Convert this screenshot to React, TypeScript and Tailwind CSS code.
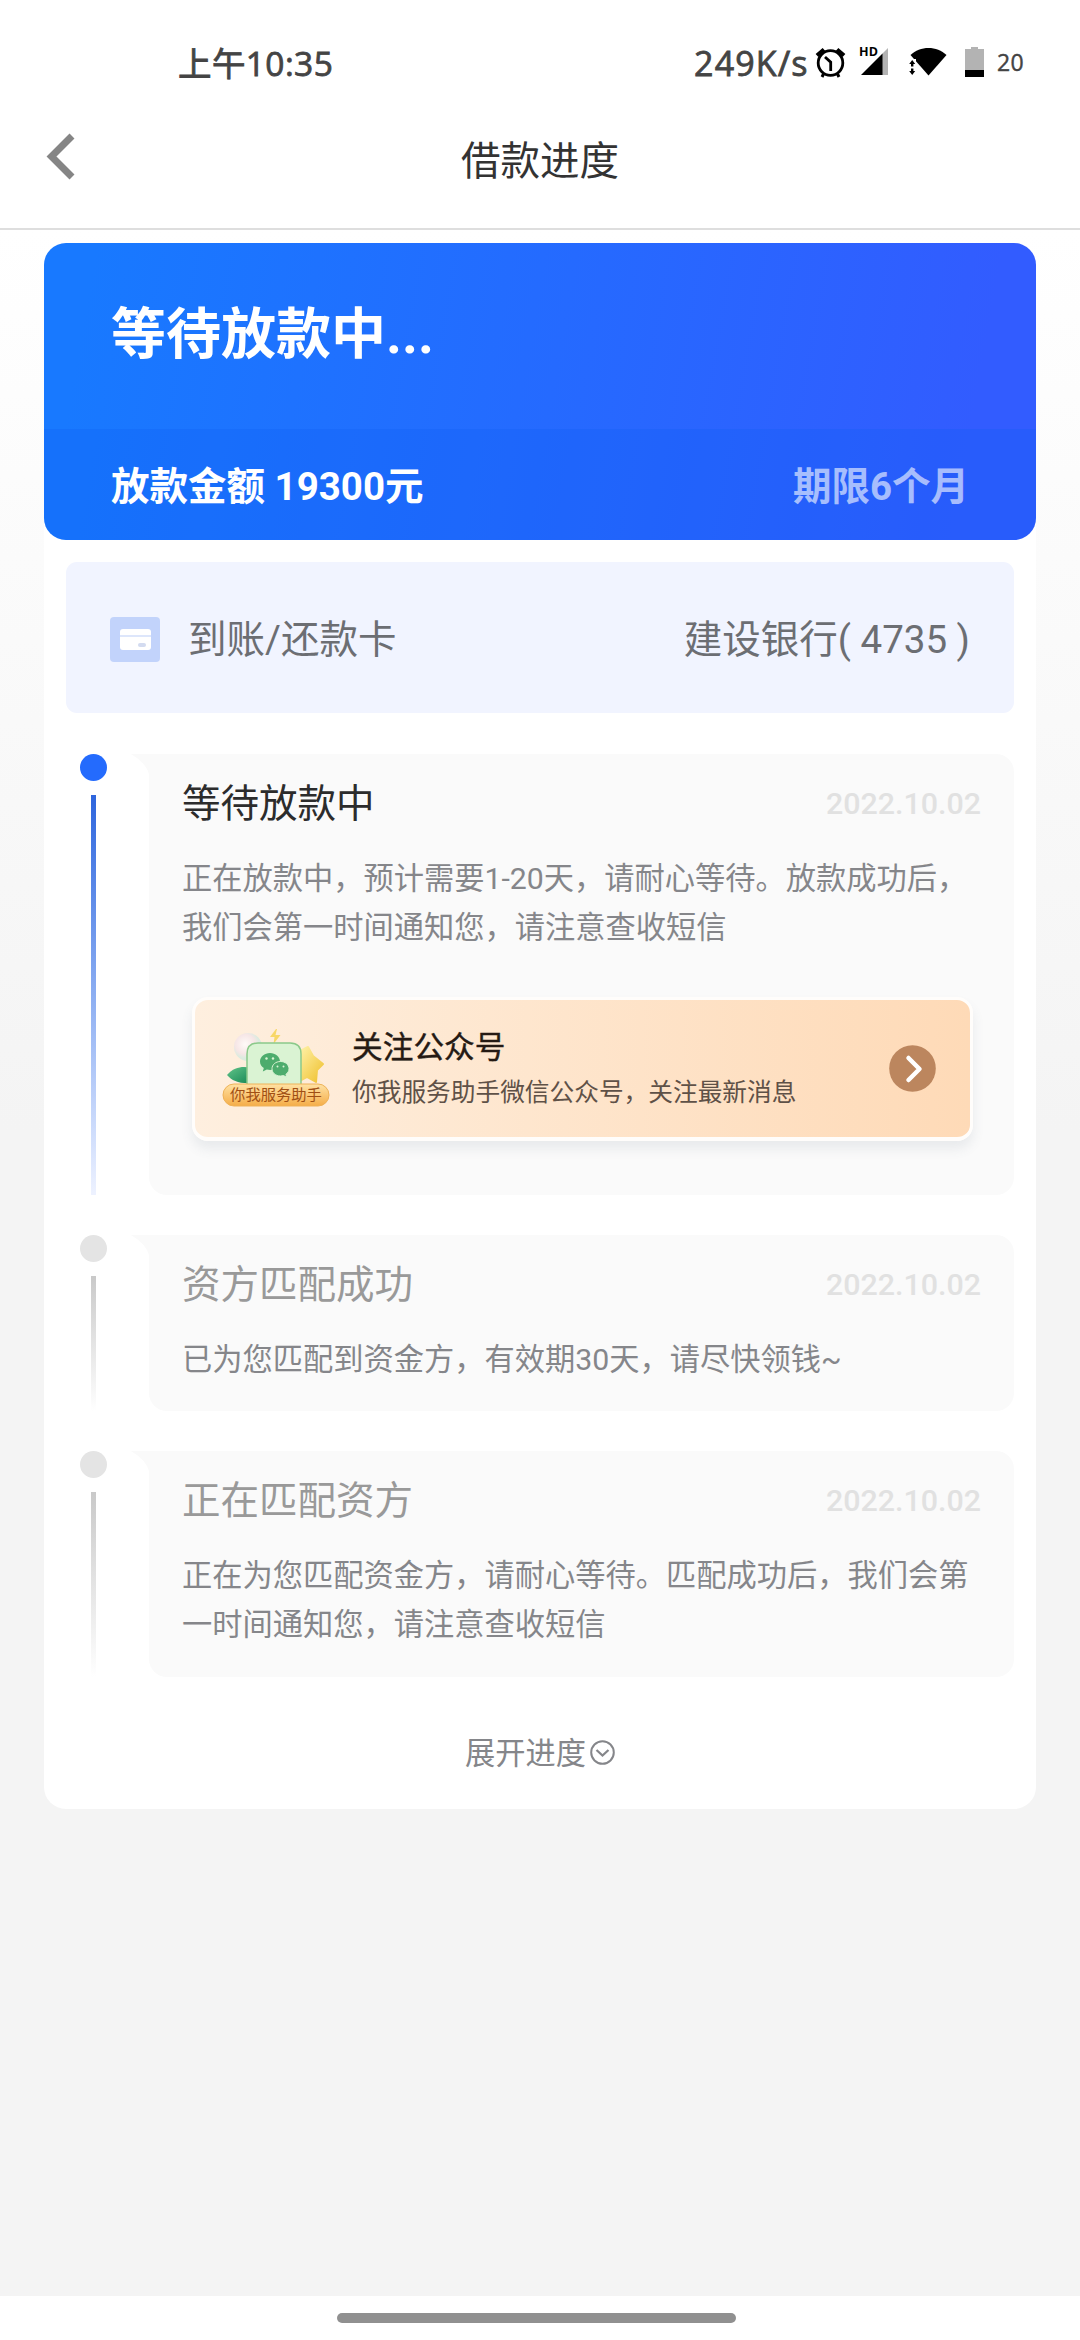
import { HTMLAttributes, ReactNode } from "react"
import { clsx } from "clsx"

type Step = {
  title: string
  date: string
  lines: string[]
  active?: boolean
  extra?: ReactNode
}

function AlarmIcon() {
  return (
    <svg width="31" height="31" viewBox="0 0 31 31" fill="none" stroke="#000">
      <circle cx="15.5" cy="16" r="12.3" strokeWidth="2.8" />
      <path d="M10 10l5.7 5.2V24" strokeWidth="2.8" />
      <path d="M2 8.5L9 2.5M29 8.5l-7-6" strokeWidth="4.2" />
      <path d="M8.5 27l-1.5 3M22.500 27l1.500 3" strokeWidth="3" />
    </svg>
  )
}

function SignalIcon() {
  return (
    <div className="relative h-[29px] w-[30px]">
      <svg width="30" height="29" viewBox="0 0 30 29">
        <path d="M29 1v27h-6V7z" fill="#b3b3b3" />
        <path d="M23.500 6.500V28H2z" fill="#000" />
      </svg>
      <span className="absolute -top-px left-0 font-['Open_Sans',sans-serif] text-[12.5px] leading-[12px] font-bold text-black">
        HD
      </span>
    </div>
  )
}

function WifiIcon() {
  return (
    <svg width="38" height="29" viewBox="0 0 38 29">
      <path d="M19.500 28.500L1.500 8C11-1.500 28-1.500 37.500 8z" fill="#000" />
      <path d="M-1 12h8v17h-8z" fill="#fff" />
      <path d="M3.200 13l3 4H4.400v2.500H2V17H.2zM3.200 28l3-4H4.400v-2.500H2V24H.2z" fill="#000" />
    </svg>
  )
}

function BatteryIcon() {
  return (
    <svg width="19" height="30" viewBox="0 0 19 30">
      <path d="M6 0h7v2h6v21H0V2h6z" fill="#b3b3b3" />
      <path d="M0 23h19v7H0z" fill="#000" />
    </svg>
  )
}

function StatusBar() {
  return (
    <div className="flex h-[125px] justify-between pr-[56px] pl-[178px] font-['Open_Sans','Noto_Sans_CJK_SC',sans-serif] text-[#444]">
      <span className="pt-[39px] text-[33.5px] leading-[48px] tracking-[0.4px] [-webkit-text-stroke:0.8px_#444]">
        上午10:35
      </span>
      <div className="flex h-[125px]">
        <span className="w-[121px] pt-[39px] text-[34px] leading-[48px] tracking-[1.1px] [-webkit-text-stroke:0.8px_#444]">
          249K/s
        </span>
        <div className="mt-[47px] flex h-[31px]">
          <AlarmIcon />
          <div className="ml-[13px]">
            <SignalIcon />
          </div>
          <div className="ml-[20px]">
            <WifiIcon />
          </div>
          <div className="ml-[18px]">
            <BatteryIcon />
          </div>
        </div>
        <span className="ml-[13px] pt-[50px] text-[23px] leading-[24px] tracking-[0.3px] [-webkit-text-stroke:0.4px_#444]">
          20
        </span>
      </div>
    </div>
  )
}

function NavBar() {
  return (
    <div className="grid h-[105px] grid-cols-3 border-b-2 border-[#dedede]">
      <svg className="mt-[6px] ml-[44px]" width="34" height="52" viewBox="0 0 34 52">
        <path d="M28 5L7.500 25.500 28 46" fill="none" stroke="#858585" strokeWidth="7" />
      </svg>
      <h1 className="pt-[8px] text-center text-[39.500px] leading-[58px] text-[#333]">
        借款进度
      </h1>
    </div>
  )
}

function CardIcon() {
  return (
    <svg width="50" height="45" viewBox="0 0 50 45">
      <rect width="50" height="45" rx="4" fill="#c2d3fb" />
      <rect x="10" y="12" width="31" height="21" rx="3" fill="#fff" />
      <path d="M10 19h31" stroke="#dde6fb" strokeWidth="2" />
      <rect x="28" y="26" width="8" height="4" rx="2" fill="#d3dbf0" />
    </svg>
  )
}

function MascotIcon() {
  return (
    <div className="relative h-[80px] w-[108px]">
      <svg width="108" height="80" viewBox="0 0 108 80">
        <defs>
          <linearGradient id="pill" x1="0" y1="0" x2="0" y2="1">
            <stop offset="0" stopColor="#ffe2a4" />
            <stop offset="1" stopColor="#f5ad48" />
          </linearGradient>
          <linearGradient id="star" x1="0" y1="0" x2="1" y2="1">
            <stop offset="0" stopColor="#fff3ad" />
            <stop offset="1" stopColor="#efc02c" />
          </linearGradient>
          <linearGradient id="leaf" x1="0" y1="0" x2="1" y2="1">
            <stop offset="0" stopColor="#62c489" />
            <stop offset="1" stopColor="#158654" />
          </linearGradient>
          <radialGradient id="bubble" cx=".4" cy=".4">
            <stop offset="0" stopColor="#fffaf8" />
            <stop offset=".7" stopColor="#f6e6e6" />
            <stop offset="1" stopColor="#dcebdf" />
          </radialGradient>
        </defs>
        <circle cx="26" cy="18" r="14" fill="url(#bubble)" />
        <path d="M54 0l-6 8h4.500l-1 7 7-9h-5l1.500-6z" fill="#f7d768" />
        <path
          d="M86 18l5 9 10 8-6 6-1 12-9-5-9 5V23z"
          fill="url(#star)"
          stroke="url(#star)"
          strokeWidth="2"
          strokeLinejoin="round"
        />
        <path d="M5 46c7-8 16-9 24-7l1 15C18 55 10 52 5 46z" fill="url(#leaf)" />
        <path
          d="M25 56V25c0-7 4-11 11-11h32c7 0 11 4 11 11v31z"
          fill="#daf3d3"
          stroke="#8bc98a"
          strokeWidth="1.500"
        />
        <path
          d="M48 24c-5.500 0-10 3.700-10 8.500 0 2.800 1.400 5 3.800 6.500l-1 3.500 4-2c1 .3 2.200.5 3.400.5 5.500 0 9.800-3.700 9.800-8.500S53.500 24 48 24z"
          fill="#4dac6d"
        />
        <path
          d="M58.500 32.500c-5 0-8.500 3.300-8.500 7.200 0 4 3.500 7.300 8.500 7.300 1 0 2-.2 3-.5l3.200 1.800-.8-3c2-1.400 3.100-3.300 3.100-5.600 0-4-3.700-7.200-8.500-7.200z"
          fill="#4dac6d"
          stroke="#daf3d3"
        />
        <g fill="#daf3d3">
          <circle cx="44.500" cy="29.500" r="1.200" />
          <circle cx="51" cy="29.500" r="1.200" />
          <circle cx="55.500" cy="37.500" r="1" />
          <circle cx="61.500" cy="37.500" r="1" />
        </g>
        <rect x="1" y="55" width="106" height="22" rx="11" fill="url(#pill)" stroke="#eeb258" />
      </svg>
      <span className="absolute top-[55px] left-0 w-[108px] text-center text-[15.300px] leading-[22px] whitespace-nowrap text-[#a04f14]">
        你我服务助手
      </span>
    </div>
  )
}

function FollowBanner() {
  return (
    <div className="mt-[45px] ml-[10px] flex h-[144px] w-[781px] items-center rounded-[16px] border-[3px] border-b-4 border-[#fffdfb] bg-gradient-to-r from-[#feefdf] to-[#fedab7] pl-[27px] shadow-[0_8px_12px_rgba(80,100,120,0.1)]">
      <MascotIcon />
      <div className="ml-[22px] flex-1 pt-[4px]">
        <div className="text-[30.700px] leading-[44px] text-[#251a14] [-webkit-text-stroke:0.4px_#251a14]">
          关注公众号
        </div>
        <div className="text-[24.700px] leading-[46px] text-[#5f5147]">
          你我服务助手微信公众号，关注最新消息
        </div>
      </div>
      <svg className="mr-[34px]" width="47" height="47" viewBox="0 0 47 47">
        <circle cx="23.500" cy="23.500" r="23.300" fill="#bc865e" />
        <path
          d="M19.500 13l11 11-11 11"
          fill="none"
          stroke="#fff"
          strokeWidth="4.500"
          strokeLinecap="round"
          strokeLinejoin="round"
        />
      </svg>
    </div>
  )
}

const steps: Step[] = [
  {
    title: "等待放款中",
    date: "2022.10.02",
    lines: [
      "正在放款中，预计需要1-20天，请耐心等待。放款成功后，",
      "我们会第一时间通知您，请注意查收短信",
    ],
    active: true,
    extra: <FollowBanner />,
  },
  {
    title: "资方匹配成功",
    date: "2022.10.02",
    lines: ["已为您匹配到资金方，有效期30天，请尽快领钱~"],
  },
  {
    title: "正在匹配资方",
    date: "2022.10.02",
    lines: [
      "正在为您匹配资金方，请耐心等待。匹配成功后，我们会第",
      "一时间通知您，请注意查收短信",
    ],
  },
]

function TimelineStep({
  step,
  className,
  ...props
}: { step: Step } & HTMLAttributes<HTMLLIElement>) {
  const { title, date, lines, active, extra } = step

  return (
    <li className={clsx("flex", className)} {...props}>
      <div className="flex w-[27px] flex-col items-center">
        <span
          className={clsx(
            "size-[27px] shrink-0 rounded-full",
            active ? "bg-[#246bfd]" : "bg-[#e4e4e4]"
          )}
        />
        <span
          className={clsx(
            "mt-[14px] w-[5px] flex-1 bg-gradient-to-b",
            active ? "from-[#2e65dd] to-[#eef2ff]" : "from-[#c9c9c9] to-white"
          )}
        />
      </div>
      <div className="relative ml-[42px] flex-1 rounded-[18px] rounded-tl-none bg-[#fafafa] pr-[33px] pl-[33px]">
        <svg className="absolute top-0 -left-[18px]" width="18" height="20" viewBox="0 0 18 20">
          <path d="M0 0h18v20Q15 9 0 0z" fill="#fafafa" />
        </svg>
        <div className="flex h-[100px] items-center justify-between">
          <h3
            className={clsx(
              "text-[38.500px]",
              active ? "text-[#2c2c2c]" : "text-[#999]"
            )}
          >
            {title}
          </h3>
          <span className="text-[30.400px] font-medium text-[#e1e1e1]">
            {date}
          </span>
        </div>
        <div className="text-[30.250px] leading-[49px] whitespace-nowrap text-[#85868a]">
          {lines.map((line) => (
            <p key={line}>{line}</p>
          ))}
        </div>
        {extra}
      </div>
    </li>
  )
}

export default function App() {
  return (
    <div className="flex h-[2340px] w-[1080px] flex-col overflow-hidden bg-white font-[Roboto,'Noto_Sans_CJK_SC',sans-serif]">
      <StatusBar />
      <NavBar />
      <main className="h-[2066px] bg-[linear-gradient(#fff_0px,#f4f4f4_900px)] px-[44px] pt-[13px]">
        <div className="h-[1566px] rounded-[22px] bg-white">
          <section className="h-[297px] overflow-hidden rounded-[22px] bg-[linear-gradient(100deg,#1879ff_5%,#246bff_48%,#325cff_92%)] text-white">
            <h2 className="h-[186px] pt-[51px] pl-[67px] text-[55px] leading-[80px] font-bold">
              等待放款中...
            </h2>
            <div className="flex h-[111px] items-center justify-between bg-[#0a5cf0]/25 px-[67px] pt-[4px] text-[38.500px] font-bold">
              <span>放款金额 19300元</span>
              <span className="text-white/60">期限6个月</span>
            </div>
          </section>
          <section className="mx-[22px] mt-[22px] flex h-[151px] items-center rounded-[11px] bg-[#f1f4ff] px-[44px] pt-[4px] text-[38.500px] text-[#6c6e73]">
            <CardIcon />
            <span className="ml-[28px]">到账/还款卡</span>
            <span className="ml-auto">建设银行( 4735 )</span>
          </section>
          <ul className="mt-[41px] mr-[22px] ml-[36px] flex flex-col gap-[40px]">
            <TimelineStep step={steps[0]} className="h-[441px]" />
            <TimelineStep step={steps[1]} className="h-[176px]" />
            <TimelineStep step={steps[2]} className="h-[226px]" />
          </ul>
          <button className="mt-[53px] flex w-full items-center justify-center gap-[4px] text-[30.250px] leading-[48px] text-[#85868a]">
            展开进度
            <svg className="-mt-[3px]" width="25" height="25" viewBox="0 0 25 25" fill="none" stroke="#85868a" strokeWidth="2">
              <circle cx="12.500" cy="12.500" r="11.300" />
              <path d="M6.500 10l6 5.500 6-5.500" strokeWidth="2.300" />
            </svg>
          </button>
        </div>
      </main>
      <footer className="flex h-[44px] justify-center pt-[17px] pr-[7px]">
        <span className="h-[10px] w-[399px] rounded-full bg-[#909090]" />
      </footer>
    </div>
  )
}
